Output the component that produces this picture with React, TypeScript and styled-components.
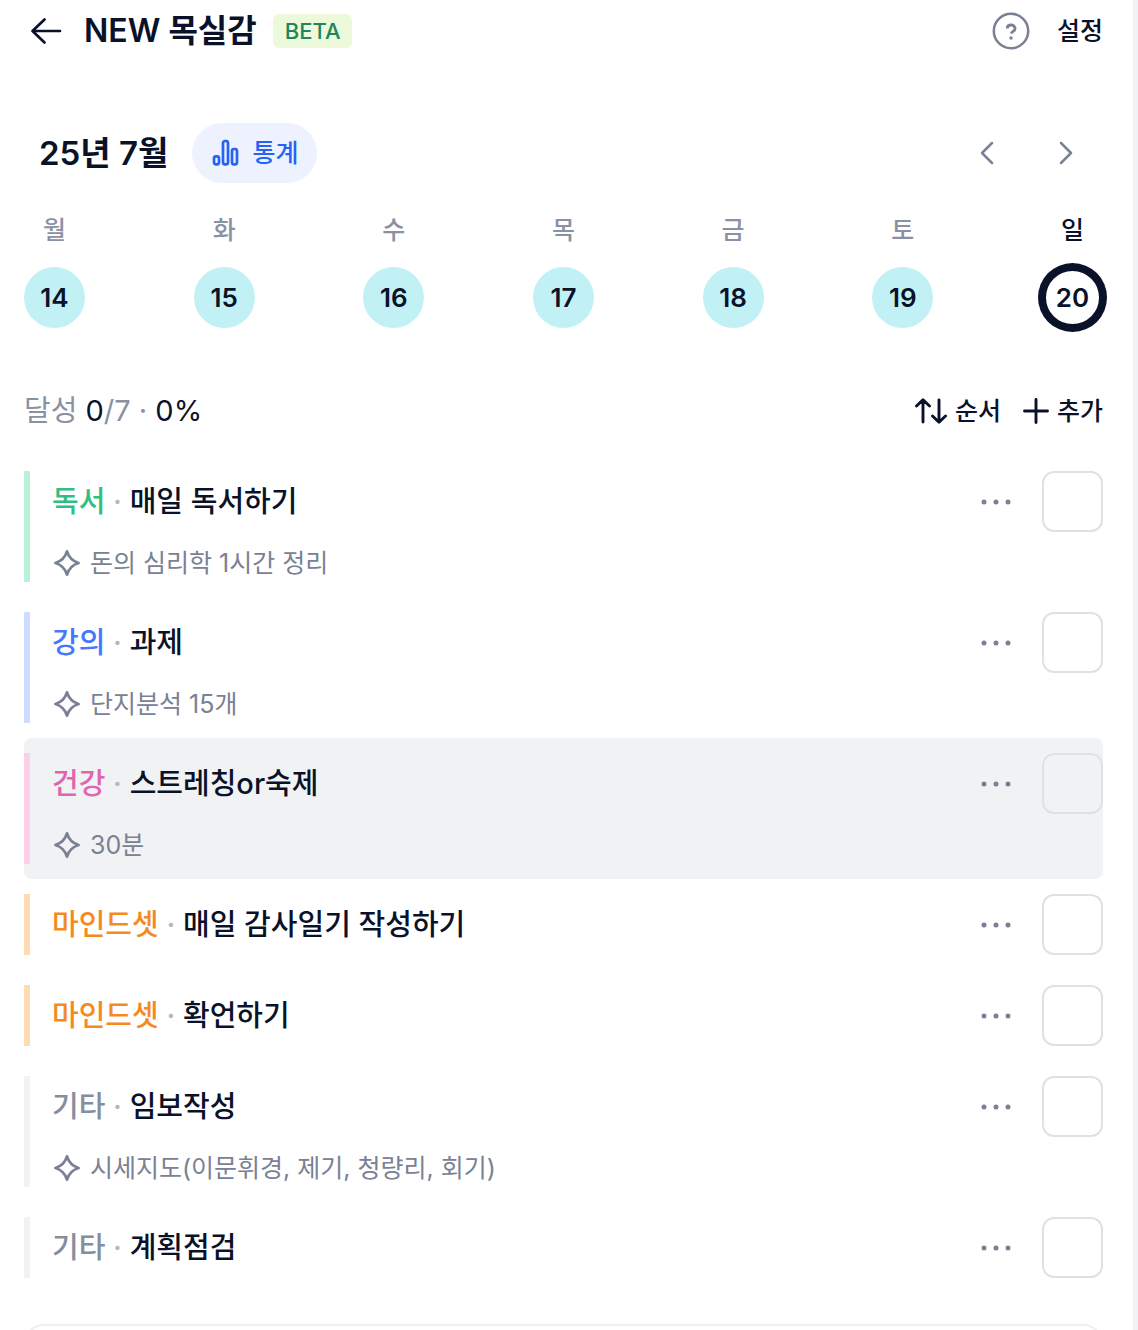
import React from "react";
import styled, { createGlobalStyle } from "styled-components";

const ink = "#0a1229";
const slate = "#7a8194";
const muted = "#8a91a3";

const Global = createGlobalStyle`
  * { box-sizing: border-box; }
  body { margin: 0; background: #f1f2f4; }
  button, input { font: inherit; color: inherit; margin: 0; }
  h1, h2, h3, p, ul { margin: 0; padding: 0; font-weight: inherit; }
`;

const Page = styled.div`
  height: 100vh;
  overflow-y: auto;
  scrollbar-width: none;
  margin-right: 5px;
  padding: 0 30px 0 24px;
  background: #fff;
  color: ${ink};
  font-family: Inter, "Noto Sans CJK KR", sans-serif;
  font-size: 25px;
  font-weight: 500;
  line-height: 32px;
`;

const Row = styled.div<{ $gap?: number }>`
  display: flex;
  align-items: center;
  gap: ${(p) => p.$gap ?? 0}px;
`;

const Header = styled.header`
  display: flex;
  align-items: center;
  justify-content: space-between;
  height: 62px;
`;

const PlainButton = styled.button`
  display: inline-flex;
  align-items: center;
  justify-content: center;
  gap: 8px;
  padding: 0;
  border: 0;
  background: none;
  cursor: pointer;
  white-space: nowrap;
`;

const BackButton = styled(PlainButton)`
  width: 44px;
  height: 44px;
`;

const HelpButton = styled(PlainButton)`
  color: ${slate};
`;

const Title = styled.h1`
  padding-left: 16px;
  font-size: 32px;
  font-weight: 600;
  line-height: 40px;
  white-space: nowrap;
`;

const Badge = styled.span`
  margin-left: 16px;
  padding: 0 12px;
  border-radius: 6px;
  background: #ecfadb;
  color: #20855e;
  font-size: 22px;
  font-weight: 500;
  line-height: 34px;
`;

const MonthBar = styled.section`
  display: flex;
  align-items: center;
  justify-content: space-between;
  margin-top: 61px;
  padding-left: 15px;
`;

const Month = styled.h2`
  font-size: 33px;
  font-weight: 600;
  line-height: 40px;
`;

const StatsButton = styled(PlainButton)`
  gap: 12px;
  height: 60px;
  padding: 0 19px 0 20px;
  border-radius: 30px;
  background: #eef2ff;
  color: #2563f5;
`;

const StepButton = styled(PlainButton)`
  width: 74px;
  height: 60px;
  color: ${slate};
`;

const Week = styled.div`
  display: flex;
  justify-content: space-between;
  margin-top: 31px;
`;

const Day = styled.button<{ $today?: boolean }>`
  display: flex;
  flex-direction: column;
  align-items: center;
  gap: 21px;
  padding: 0;
  border: 0;
  background: none;
  color: ${(p) => (p.$today ? ink : muted)};
  cursor: pointer;
`;

const DayNumber = styled.span<{ $today?: boolean }>`
  display: flex;
  align-items: center;
  justify-content: center;
  width: 61px;
  height: 61px;
  border-radius: 50%;
  border: ${(p) => (p.$today ? `4px solid ${ink}` : "0")};
  box-shadow: ${(p) => (p.$today ? `0 0 0 4px ${ink}` : "none")};
  background: ${(p) => (p.$today ? "#fff" : "#c2f1f5")};
  color: ${ink};
  font-size: 26px;
  font-weight: 600;
`;

const Summary = styled.section`
  display: flex;
  align-items: center;
  justify-content: space-between;
  height: 60px;
  margin: 53px 0 15px;
`;

const Progress = styled.p`
  font-size: 29px;
  font-weight: 400;
  color: ${muted};
  line-height: 40px;
  b { font-weight: 400; color: ${ink}; }
`;

const List = styled.ul`
  list-style: none;
`;

const Item = styled.li<{ $active?: boolean }>`
  padding: 15px 0;
  border-radius: 8px;
  background: ${(p) => (p.$active ? "#f1f2f4" : "transparent")};
`;

const ItemBody = styled.div<{ $bar: string }>`
  border-left: 6px solid ${(p) => p.$bar};
  padding-left: 22px;
`;

const ItemHead = styled.div`
  display: flex;
  align-items: center;
  height: 61px;
`;

const ItemTitle = styled.label`
  flex: 1;
  font-size: 29px;
  font-weight: 500;
  line-height: 40px;
`;

const Category = styled.span<{ $color: string }>`
  color: ${(p) => p.$color};
`;

const Dot = styled.span`
  color: #b1b7c4;
`;

const MoreButton = styled(PlainButton)`
  width: 60px;
  height: 60px;
  margin-right: 16px;
  color: ${slate};
`;

const Check = styled.input`
  appearance: none;
  width: 61px;
  height: 61px;
  border: 2px solid #dfe1e6;
  border-radius: 12px;
  cursor: pointer;
  &:checked { background: ${ink}; }
`;

const Note = styled.p`
  display: flex;
  align-items: center;
  gap: 9px;
  height: 50px;
  padding: 12px 0 0 1px;
  color: ${slate};
  font-weight: 400;
`;

const NextCard = styled.section`
  height: 120px;
  margin-top: 31px;
  border: 2px solid #eeeff2;
  border-radius: 20px;
`;

const svgProps = {
  fill: "none",
  stroke: "currentColor",
  strokeLinecap: "round" as const,
  strokeLinejoin: "round" as const,
  "aria-hidden": true,
};

const BackIcon = () => (
  <svg width="32" height="28" viewBox="0 0 32 28" strokeWidth="2.7" {...svgProps}>
    <path d="M30 14H2.5M14.5 2.5 2.5 14l12 11.5" />
  </svg>
);

const HelpIcon = () => (
  <svg width="38" height="38" viewBox="0 0 38 38" strokeWidth="2.5" {...svgProps}>
    <circle cx="19" cy="19" r="17.2" />
    <path d="M15.2 16.6c0-2.200 1.700-3.600 3.900-3.600s4 1.400 4 3.600c0 2.700-3.200 2.600-4 4.900" strokeWidth="2.800" strokeLinecap="butt" />
    <circle cx="19" cy="26" r="1.700" fill="currentColor" stroke="none" />
  </svg>
);

const StatsIcon = () => (
  <svg width="28" height="28" viewBox="0 0 28 28" strokeWidth="2.7" {...svgProps}>
    <rect x="2" y="17.3" width="5" height="8" rx="2" />
    <rect x="11" y="2" width="5" height="23.3" rx="2" />
    <rect x="20" y="10" width="5" height="15.3" rx="2" />
  </svg>
);

const Chevron = ({ next }: { next?: boolean }) => (
  <svg width="14" height="24" viewBox="0 0 14 24" strokeWidth="2.5" {...svgProps}>
    <path d={next ? "m2 2 10 10L2 22" : "M12 2 2 12l10 10"} />
  </svg>
);

const SortIcon = () => (
  <svg width="32" height="26" viewBox="0 0 32 26" strokeWidth="2.9" {...svgProps}>
    <path d="M8 24V2M1.5 8 8 1.7 14.5 8M24 2v22M17.5 18l6.5 6.3L30.5 18" />
  </svg>
);

const PlusIcon = () => (
  <svg width="26" height="26" viewBox="0 0 26 26" strokeWidth="2.9" {...svgProps}>
    <path d="M13 1.5v23M1.5 13h23" />
  </svg>
);

const MoreIcon = () => (
  <svg width="30" height="6" viewBox="0 0 30 6" fill="currentColor" aria-hidden="true">
    <circle cx="3" cy="3" r="2.5" />
    <circle cx="15" cy="3" r="2.5" />
    <circle cx="27" cy="3" r="2.5" />
  </svg>
);

const SparkIcon = () => (
  <svg width="28" height="28" viewBox="0 0 28 28" strokeWidth="2.8" {...svgProps}>
    <path d="M14 2.4C15.9 8.800 19 12 25.600 14C19 16 15.900 19.200 14 25.600C12.100 19.200 9 16 2.400 14C9 12 12.100 8.800 14 2.400Z" />
  </svg>
);

const days = [
  { name: "월", date: 14 },
  { name: "화", date: 15 },
  { name: "수", date: 16 },
  { name: "목", date: 17 },
  { name: "금", date: 18 },
  { name: "토", date: 19 },
  { name: "일", date: 20, today: true },
];

const palette = {
  독서: { color: "#2fbf82", bar: "#b9f2d6" },
  강의: { color: "#4478ff", bar: "#cfdcff" },
  건강: { color: "#e064af", bar: "#fccfeb" },
  마인드셋: { color: "#f58a1f", bar: "#ffdcb5" },
  기타: { color: "#858d9f", bar: "#f1f2f4" },
};

type Todo = { category: keyof typeof palette; title: string; note?: string; active?: boolean };

const todos: Todo[] = [
  { category: "독서", title: "매일 독서하기", note: "돈의 심리학 1시간 정리" },
  { category: "강의", title: "과제", note: "단지분석 15개" },
  { category: "건강", title: "스트레칭or숙제", note: "30분", active: true },
  { category: "마인드셋", title: "매일 감사일기 작성하기" },
  { category: "마인드셋", title: "확언하기" },
  { category: "기타", title: "임보작성", note: "시세지도(이문휘경, 제기, 청량리, 회기)" },
  { category: "기타", title: "계획점검" },
];

function TodoItem({ todo, id }: { todo: Todo; id: string }) {
  const tone = palette[todo.category];
  return (
    <Item $active={todo.active}>
      <ItemBody $bar={tone.bar}>
        <ItemHead>
          <ItemTitle htmlFor={id}>
            <Category $color={tone.color}>{todo.category}</Category>
            <Dot> · </Dot>
            {todo.title}
          </ItemTitle>
          <MoreButton type="button" aria-label="더보기">
            <MoreIcon />
          </MoreButton>
          <Check type="checkbox" id={id} />
        </ItemHead>
        {todo.note && (
          <Note>
            <SparkIcon />
            {todo.note}
          </Note>
        )}
      </ItemBody>
    </Item>
  );
}

export default function App() {
  return (
    <>
      <Global />
      <Page>
        <Header>
          <Row>
            <BackButton type="button" aria-label="뒤로">
              <BackIcon />
            </BackButton>
            <Title>NEW 목실감</Title>
            <Badge>BETA</Badge>
          </Row>
          <Row $gap={27}>
            <HelpButton type="button" aria-label="도움말">
              <HelpIcon />
            </HelpButton>
            <PlainButton type="button">설정</PlainButton>
          </Row>
        </Header>

        <MonthBar>
          <Row $gap={24}>
            <Month>25년 7월</Month>
            <StatsButton type="button">
              <StatsIcon />
              통계
            </StatsButton>
          </Row>
          <Row $gap={5}>
            <StepButton type="button" aria-label="이전 주">
              <Chevron />
            </StepButton>
            <StepButton type="button" aria-label="다음 주">
              <Chevron next />
            </StepButton>
          </Row>
        </MonthBar>

        <Week>
          {days.map((d) => (
            <Day key={d.date} type="button" $today={d.today}>
              {d.name}
              <DayNumber $today={d.today}>{d.date}</DayNumber>
            </Day>
          ))}
        </Week>

        <Summary>
          <Progress>
            달성 <b>0</b>/7 · <b>0%</b>
          </Progress>
          <Row $gap={22}>
            <PlainButton type="button">
              <SortIcon />
              순서
            </PlainButton>
            <PlainButton type="button">
              <PlusIcon />
              추가
            </PlainButton>
          </Row>
        </Summary>

        <List>
          {todos.map((todo, i) => (
            <TodoItem key={i} id={`todo-${i}`} todo={todo} />
          ))}
        </List>

        <NextCard />
      </Page>
    </>
  );
}
